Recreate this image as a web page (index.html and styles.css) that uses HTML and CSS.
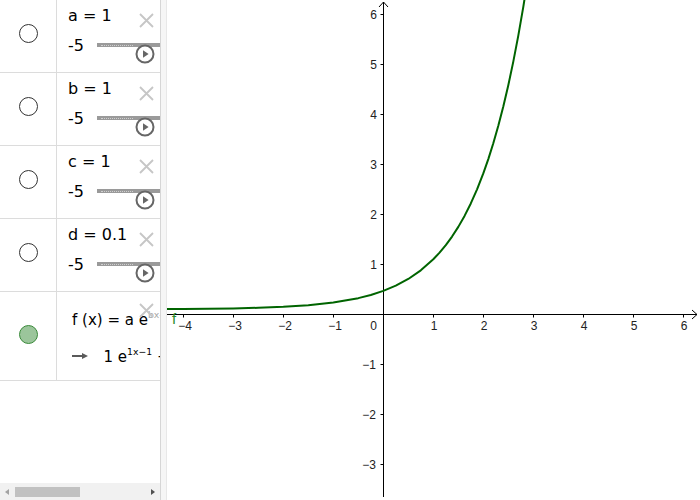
FILE: index.html
```html
<!DOCTYPE html>
<html>
<head>
<meta charset="utf-8">
<link rel="stylesheet" href="styles.css">
</head>
<body>
<div class="app">
  <div class="algebra">
    <div class="rows">
      <div class="row slider-row">
        <div class="marble-cell"><span class="marble"></span></div>
        <div class="content">
          <div class="def">a = 1</div>
          <div class="slider"><span class="min">-5</span><span class="track"></span></div>
          <svg class="close" width="15" height="15" viewBox="0 0 15 15"><path d="M1 1L14 14M14 1L1 14"/></svg>
          <svg class="play" width="20" height="20" viewBox="0 0 20 20"><circle cx="10" cy="10" r="8.5"/><path d="M8 6.3V13.7L13.6 10Z"/></svg>
        </div>
      </div>
      <div class="row slider-row">
        <div class="marble-cell"><span class="marble"></span></div>
        <div class="content">
          <div class="def">b = 1</div>
          <div class="slider"><span class="min">-5</span><span class="track"></span></div>
          <svg class="close" width="15" height="15" viewBox="0 0 15 15"><path d="M1 1L14 14M14 1L1 14"/></svg>
          <svg class="play" width="20" height="20" viewBox="0 0 20 20"><circle cx="10" cy="10" r="8.5"/><path d="M8 6.3V13.7L13.6 10Z"/></svg>
        </div>
      </div>
      <div class="row slider-row">
        <div class="marble-cell"><span class="marble"></span></div>
        <div class="content">
          <div class="def">c = 1</div>
          <div class="slider"><span class="min">-5</span><span class="track"></span></div>
          <svg class="close" width="15" height="15" viewBox="0 0 15 15"><path d="M1 1L14 14M14 1L1 14"/></svg>
          <svg class="play" width="20" height="20" viewBox="0 0 20 20"><circle cx="10" cy="10" r="8.5"/><path d="M8 6.3V13.7L13.6 10Z"/></svg>
        </div>
      </div>
      <div class="row slider-row">
        <div class="marble-cell"><span class="marble"></span></div>
        <div class="content">
          <div class="def">d = 0.1</div>
          <div class="slider"><span class="min">-5</span><span class="track"></span></div>
          <svg class="close" width="15" height="15" viewBox="0 0 15 15"><path d="M1 1L14 14M14 1L1 14"/></svg>
          <svg class="play" width="20" height="20" viewBox="0 0 20 20"><circle cx="10" cy="10" r="8.5"/><path d="M8 6.3V13.7L13.6 10Z"/></svg>
        </div>
      </div>
      <div class="row func-row">
        <div class="marble-cell"><span class="marble on"></span></div>
        <div class="content func">
          <div class="formula">f (x) = a e<span class="sup faded">bx-c</span></div>
          <div class="value"><svg class="arrow" width="16" height="8" viewBox="0 0 16 8"><path class="shaft" d="M0 4H11"/><path class="head" d="M10 1L16 4L10 7Z"/></svg><span class="num">1 e<span class="sup">1x−1</span> + 0.1</span></div>
          <svg class="close fclose" width="15" height="15" viewBox="0 0 15 15"><path d="M1 1L14 14M14 1L1 14"/></svg>
        </div>
      </div>
    </div>
    <div class="scrollbar">
      <span class="arr-left"></span>
      <span class="thumb"></span>
      <span class="arr-right"></span>
    </div>
  </div>
  <div class="divider"></div>
  <div class="graphics">
    <svg width="533" height="500" viewBox="167 0 533 500">
      <g class="axes">
        <path d="M167 314.5H697M692 310L697 314.5L692 319"/>
        <path d="M383.5 497V2M379 7L383.5 2L388 7"/>
        <path d="M183.5 314.5v3M233.5 314.5v3M283.5 314.5v3M333.5 314.5v3M433.5 314.5v3M483.5 314.5v3M533.5 314.5v3M583.5 314.5v3M633.5 314.5v3M683.5 314.5v3"/>
        <path d="M383.5 14.5h-3M383.5 64.5h-3M383.5 114.5h-3M383.5 164.5h-3M383.5 214.5h-3M383.5 264.5h-3M383.5 364.5h-3M383.5 414.5h-3M383.5 464.5h-3"/>
      </g>
      <g class="xlabels">
        <text x="185" y="330">−4</text>
        <text x="235" y="330">−3</text>
        <text x="285" y="330">−2</text>
        <text x="335" y="330">−1</text>
        <text x="434" y="330">1</text>
        <text x="484" y="330">2</text>
        <text x="534" y="330">3</text>
        <text x="584" y="330">4</text>
        <text x="634" y="330">5</text>
        <text x="684" y="330">6</text>
      </g>
      <g class="ylabels">
        <text x="377" y="330">0</text>
        <text x="377" y="18.6">6</text>
        <text x="377" y="68.6">5</text>
        <text x="377" y="118.6">4</text>
        <text x="377" y="168.6">3</text>
        <text x="377" y="218.6">2</text>
        <text x="377" y="268.6">1</text>
        <text x="376" y="368.6">−1</text>
        <text x="376" y="418.6">−2</text>
        <text x="376" y="468.6">−3</text>
      </g>
      <path class="curve" d="M166.8 309.06L183.3 308.96L208.3 308.74L233.3 308.38L258.3 307.79L283.3 306.81L308.3 305.2L333.3 302.54L358.3 298.15L370.8 294.98L383.3 290.9L395.8 285.68L408.3 278.98L420.8 270.36L433.3 259.3L439.55 252.64L445.8 245.1L452.05 236.55L458.3 226.87L464.55 215.89L470.8 203.45L477.05 189.36L483.3 173.39L488.3 159.09L493.3 143.3L498.3 125.84L503.3 106.54L508.3 85.2L513.3 61.65L518.3 35.6L523.3 6.82L525.8 -8.7"/>
      <text class="flabel" x="172" y="324">f</text>
    </svg>
  </div>
</div>
</body>
</html>
```

FILE: styles.css
```css
html, body {
  margin: 0;
  padding: 0;
  width: 700px;
  height: 500px;
  overflow: hidden;
  background: #fff;
}

.app {
  display: flex;
  width: 700px;
  height: 500px;
  font-family: "DejaVu Sans", sans-serif;
  color: #000;
}

.algebra {
  width: 160px;
  height: 500px;
  flex: none;
  display: flex;
  flex-direction: column;
  justify-content: space-between;
  overflow: hidden;
}

.rows {
  display: flex;
  flex-direction: column;
}

.row {
  display: flex;
  border-bottom: 1px solid #dcdcdc;
}

.slider-row {
  height: 72px;
}

.func-row {
  height: 88px;
}

.marble-cell {
  width: 56px;
  flex: none;
  border-right: 1px solid #dcdcdc;
  display: flex;
  justify-content: center;
  align-items: flex-start;
}

.marble {
  display: block;
  width: 19px;
  height: 19px;
  box-sizing: border-box;
  border: 1px solid #333;
  border-radius: 50%;
  margin-top: 24px;
  background: #fff;
}

.marble.on {
  margin-top: 32.5px;
  background: #9bc59b;
  border-color: #3a8a3a;
}

.content {
  position: relative;
  flex: 1;
  min-width: 0;
  overflow: hidden;
  padding-left: 11px;
  font-size: 16px;
}

.def {
  padding-top: 5.5px;
  line-height: 20px;
  white-space: nowrap;
}

.slider {
  display: flex;
  margin-top: 10px;
  line-height: 20px;
  height: 20px;
}

.min {
  flex: none;
}

.track {
  position: relative;
  flex: none;
  width: 80px;
  height: 4px;
  margin-left: 13px;
  margin-top: 7.5px;
  background: #9a9a9a;
}

.track::after {
  content: "";
  position: absolute;
  left: 4px;
  top: 2px;
  width: 32px;
  border-top: 1px dotted #cfcfcf;
}

.close {
  position: absolute;
  left: 81.5px;
  top: 12.5px;
}

.close path {
  stroke: #c6c6c6;
  stroke-width: 1.8;
  fill: none;
}

.fclose {
  top: 10.5px;
}

.play {
  position: absolute;
  left: 78px;
  top: 44px;
}

.play circle {
  fill: #fff;
  stroke: #666;
  stroke-width: 2;
}

.play path {
  fill: #666;
}

.func {
  padding-left: 15px;
  font-size: 15px;
}

.formula {
  padding-top: 17.8px;
  line-height: 20px;
  white-space: nowrap;
}

.value {
  margin-top: 17px;
  line-height: 20px;
  white-space: nowrap;
  display: flex;
  align-items: center;
}

.arrow {
  flex: none;
  margin-right: 15.5px;
  margin-top: -2px;
}

.arrow .shaft {
  stroke: #5a5a5a;
  stroke-width: 2;
}

.arrow .head {
  fill: #5a5a5a;
}

.num {
  white-space: nowrap;
}

.sup {
  font-size: 9.3px;
  line-height: 0;
  vertical-align: 7px;
}

.faded {
  color: #a8a8a8;
}

.scrollbar {
  height: 17px;
  flex: none;
  display: flex;
  align-items: center;
  background: #f1f1f1;
}

.arr-left {
  width: 0;
  height: 0;
  margin-left: 5px;
  border-top: 3.5px solid transparent;
  border-bottom: 3.5px solid transparent;
  border-right: 4px solid #a3a3a3;
}

.thumb {
  width: 65px;
  height: 10px;
  margin-left: 6px;
  background: #c1c1c1;
}

.arr-right {
  width: 0;
  height: 0;
  margin-left: auto;
  margin-right: 5px;
  border-top: 3.5px solid transparent;
  border-bottom: 3.5px solid transparent;
  border-left: 4px solid #505050;
}

.divider {
  width: 5px;
  flex: none;
  border-left: 1px solid #d6d6d6;
  border-right: 1px solid #e8e8e8;
  background: #f6f6f6;
}

.graphics {
  flex: 1;
  overflow: hidden;
}

.graphics svg {
  display: block;
}

.axes path {
  stroke: #000;
  stroke-width: 1;
  fill: none;
}

.xlabels text,
.ylabels text {
  font-family: "Liberation Sans", Arial, sans-serif;
  font-size: 12px;
  fill: #222;
}

.xlabels text {
  text-anchor: middle;
}

.ylabels text {
  text-anchor: end;
}

.curve {
  fill: none;
  stroke: #006400;
  stroke-width: 2;
  stroke-linejoin: round;
}

.flabel {
  font-family: "Liberation Sans", Arial, sans-serif;
  font-size: 15px;
  fill: #2a8a2a;
}
```
